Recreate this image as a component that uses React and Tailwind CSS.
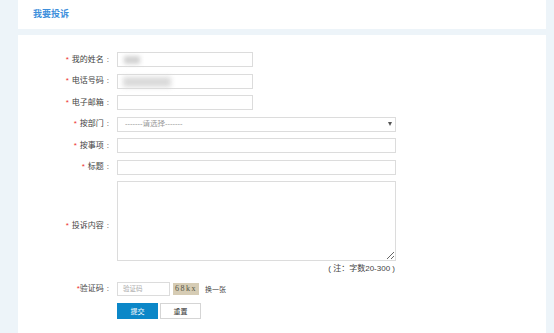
import { useState } from 'react';

const fontStack = { fontFamily: '"Liberation Sans", "Noto Sans CJK SC", sans-serif' };

function Label({ text, star = true, tight = false, className = '' }) {
    return (
        <div className={`w-[91px] shrink-0 text-right text-[8px] text-[#444] leading-none ${className}`}>
            {star && <span className={tight ? 'text-[#e33]' : 'text-[#e33] mr-[3px]'}>*</span>}
            {text}
            <span className="ml-[3px]">:</span>
        </div>
    );
}

function Row({ label, children, star, tight, labelClass }) {
    return (
        <div className="flex items-center gap-[8px]">
            <Label text={label} star={star} tight={tight} className={labelClass} />
            {children}
        </div>
    );
}

export default function App() {
    const [dept, setDept] = useState('');

    return (
        <div className="w-[554px] h-[333px] overflow-hidden bg-[#edf4f9] pl-[18px] pr-[8px]" style={fontStack}>
            <div className="h-[29px] bg-white flex items-center pl-[15px]">
                <h2 className="text-[9px] font-bold text-[#3d8fdc] leading-none">我要投诉</h2>
            </div>

            <div className="mt-[6px] h-[298px] bg-white pt-[17px]">
                <div className="flex flex-col gap-[6.5px]">
                    <Row label="我的姓名">
                        <div className="relative w-[136px] h-[15px] border border-[#dcdcdc] bg-white">
                            <div className="absolute left-[6px] top-[3px] w-[16px] h-[8px] bg-[#d2d2d2] blur-[2px]" />
                        </div>
                    </Row>
                    <Row label="电话号码">
                        <div className="relative w-[136px] h-[15px] border border-[#dcdcdc] bg-white">
                            <div className="absolute left-[5px] top-[2px] w-[48px] h-[10px] bg-[#dadada] blur-[2.5px]" />
                        </div>
                    </Row>
                    <Row label="电子邮箱">
                        <input className="w-[136px] h-[15px] border border-[#dcdcdc] bg-white outline-none" />
                    </Row>
                    <Row label="按部门">
                        <div className="relative w-[279px] h-[15px] border border-[#dcdcdc] bg-white flex items-center">
                            <select
                                value={dept}
                                onChange={(e) => setDept(e.target.value)}
                                className="appearance-none w-full h-full bg-transparent pl-[7px] text-[7.5px] text-[#999] outline-none leading-none"
                            >
                                <option value="">-------请选择-------</option>
                            </select>
                            <span className="absolute right-[3px] top-[4px] w-0 h-0 border-l-[2.5px] border-r-[2.5px] border-t-[4px] border-l-transparent border-r-transparent border-t-[#555]" />
                        </div>
                    </Row>
                    <Row label="按事项">
                        <input className="w-[279px] h-[15px] border border-[#dcdcdc] bg-white outline-none" />
                    </Row>
                    <Row label="标题">
                        <input className="w-[279px] h-[15px] border border-[#dcdcdc] bg-white outline-none" />
                    </Row>
                    <Row label="投诉内容" labelClass="mt-[10px]">
                        <textarea className="w-[279px] h-[80px] border border-[#dcdcdc] bg-white outline-none resize-y" />
                    </Row>
                </div>

                <div className="w-[377px] mt-[4px] text-right text-[8px] text-[#444] leading-none">
                    ( 注：字数20-300 )
                </div>

                <div className="mt-[9px] flex items-center gap-[8px]">
                    <Label text="验证码" tight />
                    <div className="w-[53px] h-[14px] border border-[#dcdcdc] bg-white flex items-center pl-[5px] text-[6.5px] text-[#aaa]">
                        验证码
                    </div>
                    <div className="-ml-[5px] flex items-center gap-[6px]">
                        <div className="w-[26px] h-[12px] bg-[#d6ccb4] flex items-center justify-center text-[8px] text-[#554] tracking-[1.5px] leading-none" style={{ fontFamily: '"Liberation Serif", serif' }}>
                            68kx
                        </div>
                        <span className="text-[7px] text-[#444] leading-none">换一张</span>
                    </div>
                </div>

                <div className="mt-[7px] ml-[99px] flex gap-[2px]">
                    <button className="w-[41px] h-[16px] bg-[#0b87c8] text-white text-[7px] leading-none">提交</button>
                    <button className="w-[41px] h-[16px] bg-white border border-[#d5d5d5] text-[#333] text-[7px] leading-none">重置</button>
                </div>
            </div>
        </div>
    );
}
